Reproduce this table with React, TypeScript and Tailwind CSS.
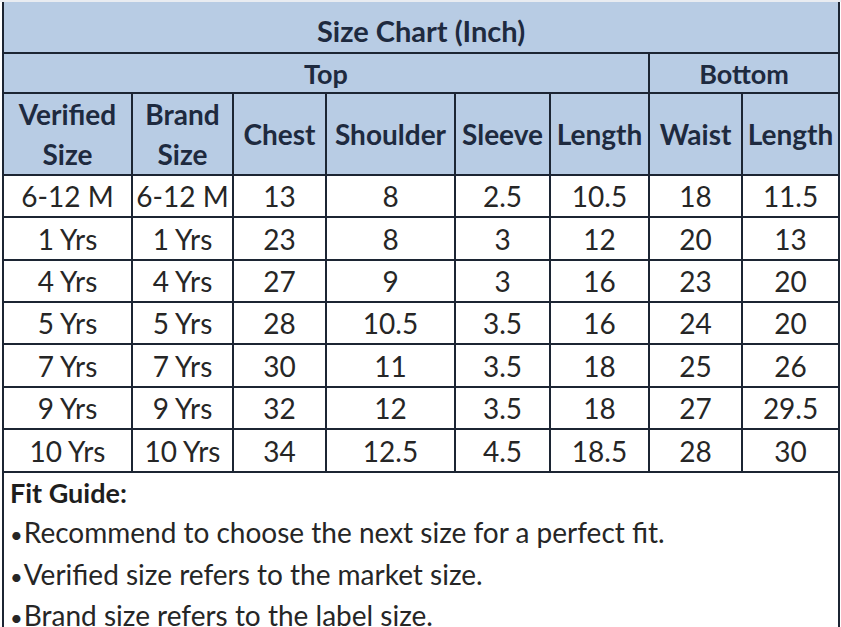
const rows = [
  ['6-12 M', '6-12 M', '13', '8', '2.5', '10.5', '18', '11.5'],
  ['1 Yrs', '1 Yrs', '23', '8', '3', '12', '20', '13'],
  ['4 Yrs', '4 Yrs', '27', '9', '3', '16', '23', '20'],
  ['5 Yrs', '5 Yrs', '28', '10.5', '3.5', '16', '24', '20'],
  ['7 Yrs', '7 Yrs', '30', '11', '3.5', '18', '25', '26'],
  ['9 Yrs', '9 Yrs', '32', '12', '3.5', '18', '27', '29.5'],
  ['10 Yrs', '10 Yrs', '34', '12.5', '4.5', '18.5', '28', '30'],
]

const rowHeights = ['h-[42px]', 'h-[43px]', 'h-[42px]', 'h-[42px]', 'h-[43px]', 'h-[42px]', 'h-[43px]']

const guide = [
  'Recommend to choose the next size for a perfect fit.',
  'Verified size refers to the market size.',
  'Brand size refers to the label size.',
]

export default function App() {
  const blue = 'bg-[#b8cce4] text-[#1e2a3f] font-bold text-center p-0 leading-none'
  const head = `border-2 border-[#1c2533] ${blue}`
  const cell = 'border-2 border-[#1c2533] text-[#262626] text-center p-0 leading-none'

  return (
    <div className="w-[841px] h-[627px] bg-white border-t-2 border-[#e9ecf1] pl-[2px] overflow-hidden font-['Lato','Liberation_Sans',sans-serif]">
      <table className="table-fixed border-collapse w-[838px]">
        <colgroup>
          <col className="w-[129px]" />
          <col className="w-[101px]" />
          <col className="w-[93px]" />
          <col className="w-[129px]" />
          <col className="w-[95px]" />
          <col className="w-[99px]" />
          <col className="w-[93px]" />
          <col className="w-[97px]" />
        </colgroup>
        <thead>
          <tr className="h-[51px]">
            <th colSpan={8} className={`border-x-2 border-b-2 border-[#1c2533] ${blue} text-[29px] pt-[6px]`}>
              Size Chart (Inch)
            </th>
          </tr>
          <tr className="h-[40px]">
            <th colSpan={6} className={`${head} text-[27px]`}>Top</th>
            <th colSpan={2} className={`${head} text-[27px]`}>Bottom</th>
          </tr>
          <tr className="h-[81px]">
            <th className={`${head} text-[28px] !leading-[40px]`}>Verified<br />Size</th>
            <th className={`${head} text-[28px] !leading-[40px]`}>Brand<br />Size</th>
            <th className={`${head} text-[28px]`}>Chest</th>
            <th className={`${head} text-[28px]`}>Shoulder</th>
            <th className={`${head} text-[28px]`}>Sleeve</th>
            <th className={`${head} text-[28px]`}>Length</th>
            <th className={`${head} text-[28px]`}>Waist</th>
            <th className={`${head} text-[28px]`}>Length</th>
          </tr>
        </thead>
        <tbody>
          {rows.map((r, i) => (
            <tr key={i} className={rowHeights[i]}>
              {r.map((v, j) => (
                <td key={j} className={`${cell} text-[28px]`}>{v}</td>
              ))}
            </tr>
          ))}
        </tbody>
      </table>
      <div className="w-[838px] h-[200px] border-x-2 border-[#1c2533] pl-[6px] text-[#262626]">
        <p className="font-bold text-[27px] leading-[40px] text-[#1e1e1e]">Fit Guide:</p>
        {guide.map(g => (
          <p key={g} className="text-[28px] leading-[39.5px]">
            <span className="text-[22px] mr-[1px]">•</span>{g}
          </p>
        ))}
      </div>
    </div>
  )
}
